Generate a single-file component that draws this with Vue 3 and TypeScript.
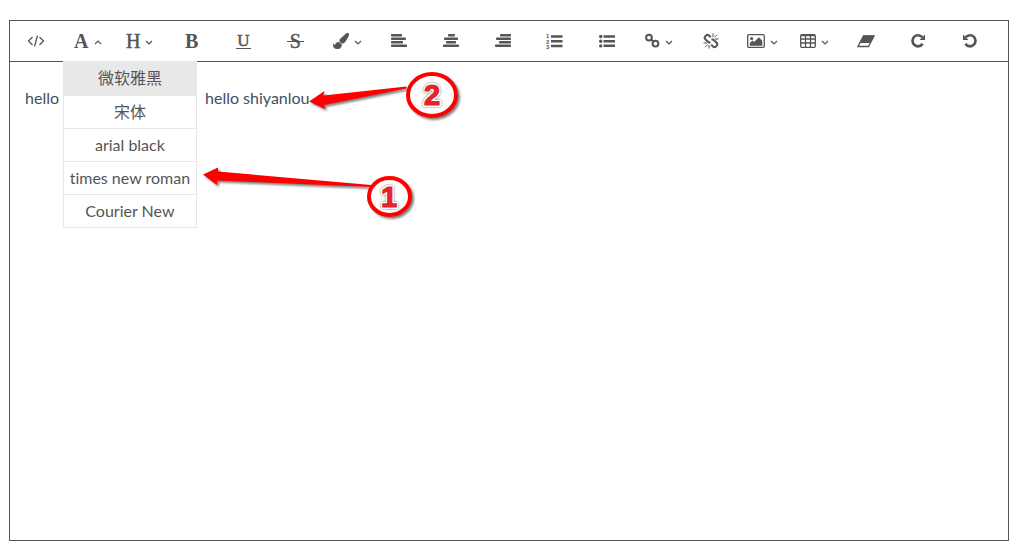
<script setup lang="ts">
import { ref } from 'vue'

interface Tool {
  name: string
  label: string
  letter?: string
  menu?: boolean
}

const tools: Tool[] = [
  { name: 'code', label: 'Source code' },
  { name: 'font', label: 'Font family', letter: 'A', menu: true },
  { name: 'heading', label: 'Heading', letter: 'H', menu: true },
  { name: 'bold', label: 'Bold', letter: 'B' },
  { name: 'underline', label: 'Underline', letter: 'U' },
  { name: 'strike', label: 'Strikethrough', letter: 'S' },
  { name: 'brush', label: 'Text colour', menu: true },
  { name: 'left', label: 'Align left' },
  { name: 'center', label: 'Align center' },
  { name: 'right', label: 'Align right' },
  { name: 'ordered', label: 'Ordered list' },
  { name: 'unordered', label: 'Unordered list' },
  { name: 'link', label: 'Link', menu: true },
  { name: 'unlink', label: 'Remove link' },
  { name: 'image', label: 'Image', menu: true },
  { name: 'table', label: 'Table', menu: true },
  { name: 'eraser', label: 'Clear format' },
  { name: 'redo', label: 'Redo' },
  { name: 'undo', label: 'Undo' },
]

const fonts = ['微软雅黑', '宋体', 'arial black', 'times new roman', 'Courier New']
const activeFont = ref(fonts[0])
const openMenu = ref('font')

function toggle(tool: Tool) {
  openMenu.value = tool.menu && openMenu.value !== tool.name ? tool.name : ''
}

const alignRows: Record<string, [number, number][]> = {
  left: [[0, 11], [0, 15], [0, 12], [0, 16]],
  center: [[5, 7], [1, 14], [3, 10], [0, 16]],
  right: [[5, 11], [1, 15], [4, 12], [0, 16]],
}
</script>

<template>
  <main class="editor">
    <ul class="toolbar">
      <li v-for="tool in tools" :key="tool.name" class="tool">
        <button
          type="button"
          class="tool-button"
          :aria-label="tool.label"
          :aria-expanded="tool.menu ? openMenu === tool.name : undefined"
          @click="toggle(tool)"
        >
          <span v-if="tool.letter" class="letter" :class="tool.name">{{ tool.letter }}</span>

          <svg v-else-if="tool.name === 'code'" width="18" height="14" viewBox="0 0 18 14" class="line">
            <path d="M5.5 3 1.5 7l4 4M12.5 3l4 4-4 4M10.5 1.5l-3 11" />
          </svg>
          <svg v-else-if="tool.name === 'brush'" width="16" height="16" viewBox="0 0 1792 1792">
            <path class="brush" d="M1615 0q70 0 122.5 46.5t52.5 116.5q0 63-45 151-332 629-465 752-97 91-218 91-126 0-216.5-92.5t-90.5-219.5q0-128 92-212l638-579q59-54 130-54zm-909 1034q39 76 106.5 130t150.5 76l1 71q4 213-129.5 347t-348.5 134q-123 0-218-46.5t-152.5-127.5-86.5-183-29-220q7 5 41 30t62 44.5 59 36.5 46 17q41 0 55-37 25-66 57.5-112.5t69.5-76 88-47.5 103-25.5 125-10.5z" />
          </svg>
          <svg v-else-if="alignRows[tool.name]" width="16" height="14" viewBox="0 0 16 14">
            <rect
              v-for="(row, i) in alignRows[tool.name]"
              :key="i"
              :x="row[0]"
              :y="i * 3.5"
              :width="row[1]"
              height="2.5"
              rx="0.7"
            />
          </svg>
          <svg v-else-if="tool.name === 'ordered'" width="17" height="16" viewBox="0 0 17 16">
            <g class="digits">
              <text x="0" y="5">1</text>
              <text x="0" y="10.5">2</text>
              <text x="0" y="16">3</text>
            </g>
            <path d="M5 2.300h11.500v2.500H5zM5 7h11.500v2.500H5zM5 11.700h11.500v2.500H5z" />
          </svg>
          <svg v-else-if="tool.name === 'unordered'" width="16" height="14" viewBox="0 0 16 14">
            <circle cx="1.7" cy="2.500" r="1.700" />
            <circle cx="1.7" cy="7.200" r="1.700" />
            <circle cx="1.7" cy="11.900" r="1.700" />
            <path d="M4.500 1.200H16v2.500H4.500zM4.500 5.900H16v2.500H4.500zM4.500 10.600H16v2.500H4.500z" />
          </svg>
          <svg v-else-if="tool.name === 'link'" width="16" height="16" viewBox="0 0 16 16" class="line thick">
            <circle cx="5" cy="4.600" r="2.900" />
            <circle cx="11.500" cy="10.600" r="2.900" />
            <path d="m6.500 6 3.500 3.300" />
          </svg>
          <svg v-else-if="tool.name === 'unlink'" width="16" height="16" viewBox="0 0 16 16" class="line thick">
            <path d="M7.800 4.200 6 2.500Q4.500 1.300 3 2.500L2.200 3.300Q1 4.800 2.300 6.200L5 8.800Q6 9.800 7.500 9.200" />
            <path d="M8.200 11.800 10 13.500q1.500 1.200 3 0l.8-.8q1.200-1.500-.1-2.900L11 7.200Q10 6.200 8.500 6.800" />
            <path class="ray" d="M10 4V.5M11.300 4.500 14 1.800M12 6h3.500M6 12v3.500M4.700 11.500 2 14.200M4 10H.5" />
          </svg>
          <svg v-else-if="tool.name === 'image'" width="18" height="14" viewBox="0 0 18 14">
            <rect x="0.700" y="0.700" width="16.600" height="12.600" rx="1.200" class="frame" />
            <circle cx="4.700" cy="4.500" r="1.600" />
            <path d="M2.800 11.800V9l2.600-2.400 1.800 1.500 4.600-4.800 3.500 3.500v5z" />
          </svg>
          <svg v-else-if="tool.name === 'table'" width="16" height="14" viewBox="0 0 16 14" class="line">
            <rect x="0.700" y="0.700" width="14.600" height="12.600" rx="1.200" />
            <path d="M1 1.500h14M1 5h14M1 9h14M5.500 1v12M10.500 1v12" />
          </svg>
          <svg v-else-if="tool.name === 'eraser'" width="18" height="13" viewBox="0 0 18 13">
            <path class="frame" d="M6.500 1h10.500l-5.500 10.500H1z" />
            <path d="M6.500.5h11L13.500 8H2.500z" />
          </svg>
          <svg v-else width="16" height="16" viewBox="0 0 16 16" :class="{ mirrored: tool.name === 'undo' }">
            <path class="turn" d="M12.200 4.200A5.500 5.500 0 1 0 12.600 10.800" />
            <path d="M15 1.500V7H9.500z" />
          </svg>

          <svg v-if="tool.menu" class="caret line" width="8" height="5" viewBox="0 0 8 5">
            <path :d="openMenu === tool.name ? 'M1 4l3-3 3 3' : 'M1 1l3 3 3-3'" />
          </svg>
        </button>

        <ul v-if="tool.name === 'font' && openMenu === 'font'" class="menu">
          <li v-for="font in fonts" :key="font">
            <button
              type="button"
              class="option"
              :class="{ active: font === activeFont }"
              @click="activeFont = font"
            >{{ font }}</button>
          </li>
        </ul>
      </li>
    </ul>

    <div class="content" contenteditable="true" role="textbox" aria-multiline="true" aria-label="Content">
      <span class="word">hello</span><span>hello shiyanlou</span>
    </div>

    <svg class="marks" width="480" height="240" viewBox="0 0 480 240" role="img" aria-label="Steps 1 and 2">
      <g class="shadowed">
        <path class="arrow" d="M309 101.500 324.500 91l-1 4.500L406.500 86.500v2L324 105l1 4z" />
        <ellipse class="ring" cx="432" cy="95" rx="24" ry="21" />
        <path class="arrow" d="M203 174.500 218 167.500v4L371 185v2L217 180.500v4.500z" />
        <ellipse class="ring" cx="389.500" cy="196.500" rx="20.500" ry="18.500" />
      </g>
      <g class="number halo">
        <text x="432" y="105">2</text>
        <text x="389" y="207">1</text>
      </g>
      <g class="number face">
        <text x="432" y="105">2</text>
        <text x="389" y="207">1</text>
      </g>
    </svg>
  </main>
</template>

<style>
body {
  margin: 0;
  background: #fff;
}
</style>

<style scoped>
.editor {
  display: flex;
  flex-direction: column;
  box-sizing: border-box;
  min-height: calc(100vh - 28px);
  margin: 20px 12px 8px 9px;
  border: 1px solid #555;
  font-family: Lato, "Noto Sans CJK SC", sans-serif;
  font-size: 16px;
  font-variant-ligatures: none;
  color: #3f4f5f;
}

ul {
  margin: 0;
  padding: 0;
  list-style: none;
}

.toolbar {
  display: flex;
  height: 40px;
  border-bottom: 1px solid #555;
}

.tool {
  position: relative;
  width: 5.2%;
}

button {
  margin: 0;
  padding: 0;
  border: 0;
  background: none;
  font: inherit;
  font-variant-ligatures: none;
  color: #555;
  cursor: pointer;
}

.tool-button {
  display: flex;
  align-items: center;
  justify-content: center;
  gap: 5px;
  width: 100%;
  height: 100%;
}

svg {
  flex: none;
  fill: #555;
}

.line {
  fill: none;
  stroke: #555;
  stroke-width: 1.3;
}

.thick {
  stroke-width: 2;
}

.ray {
  stroke-width: 1;
}

.frame {
  fill: none;
  stroke: #555;
  stroke-width: 1.3;
}

.brush {
  stroke: #555;
  stroke-width: 60;
}

.turn {
  fill: none;
  stroke: #555;
  stroke-width: 2.7;
}

.caret {
  margin-top: 3px;
  stroke-width: 1.2;
}

.mirrored {
  transform: scaleX(-1);
}

.digits {
  font: bold 6px "Liberation Sans", sans-serif;
}

.letter {
  font: bold 20px/20px "Liberation Serif", serif;
}

.letter.heading {
  font-weight: normal;
  -webkit-text-stroke: 0.5px #555;
}

.letter.underline {
  font-weight: normal;
  font-size: 17px;
  line-height: 14px;
  border-bottom: 1px solid #555;
  padding: 0 1px;
  -webkit-text-stroke: 0.5px #555;
}

.letter.strike {
  position: relative;
  font-weight: normal;
  -webkit-text-stroke: 0.5px #555;
}

.letter.strike::after {
  content: "";
  position: absolute;
  left: -3px;
  right: -3px;
  top: 10px;
  height: 1px;
  background: #555;
}

.menu {
  position: absolute;
  z-index: 1;
  top: 100%;
  left: 1px;
  width: 134px;
  background: #fff;
}

.option {
  display: block;
  box-sizing: border-box;
  width: 100%;
  padding: 4px 0;
  border: solid #e8e8e8;
  border-width: 0 1px 1px;
  line-height: 24px;
  white-space: nowrap;
}

.option.active {
  padding: 5px 0;
  background: #e8e8e8;
}

.content {
  flex: 1;
  display: flex;
  padding: 24px 15px;
  line-height: 24px;
  outline: 0;
}

.word {
  width: 180px;
}

.marks {
  position: absolute;
  top: 0;
  left: 0;
  z-index: 2;
  pointer-events: none;
}

.shadowed {
  filter: drop-shadow(2px 2px 1px rgba(0, 0, 0, 0.5));
}

.arrow {
  fill: #f00;
}

.ring {
  fill: #fff;
  stroke: #f00;
  stroke-width: 4;
}

.number {
  font: bold 29px "Liberation Sans", sans-serif;
  text-anchor: middle;
}

.halo {
  fill: #fff;
  stroke: #fff;
  stroke-width: 4;
  stroke-linejoin: round;
  filter: drop-shadow(0 0 1px #777);
}

.face {
  fill: #e3242b;
  stroke: #e3242b;
  stroke-width: 1.2;
}
</style>
